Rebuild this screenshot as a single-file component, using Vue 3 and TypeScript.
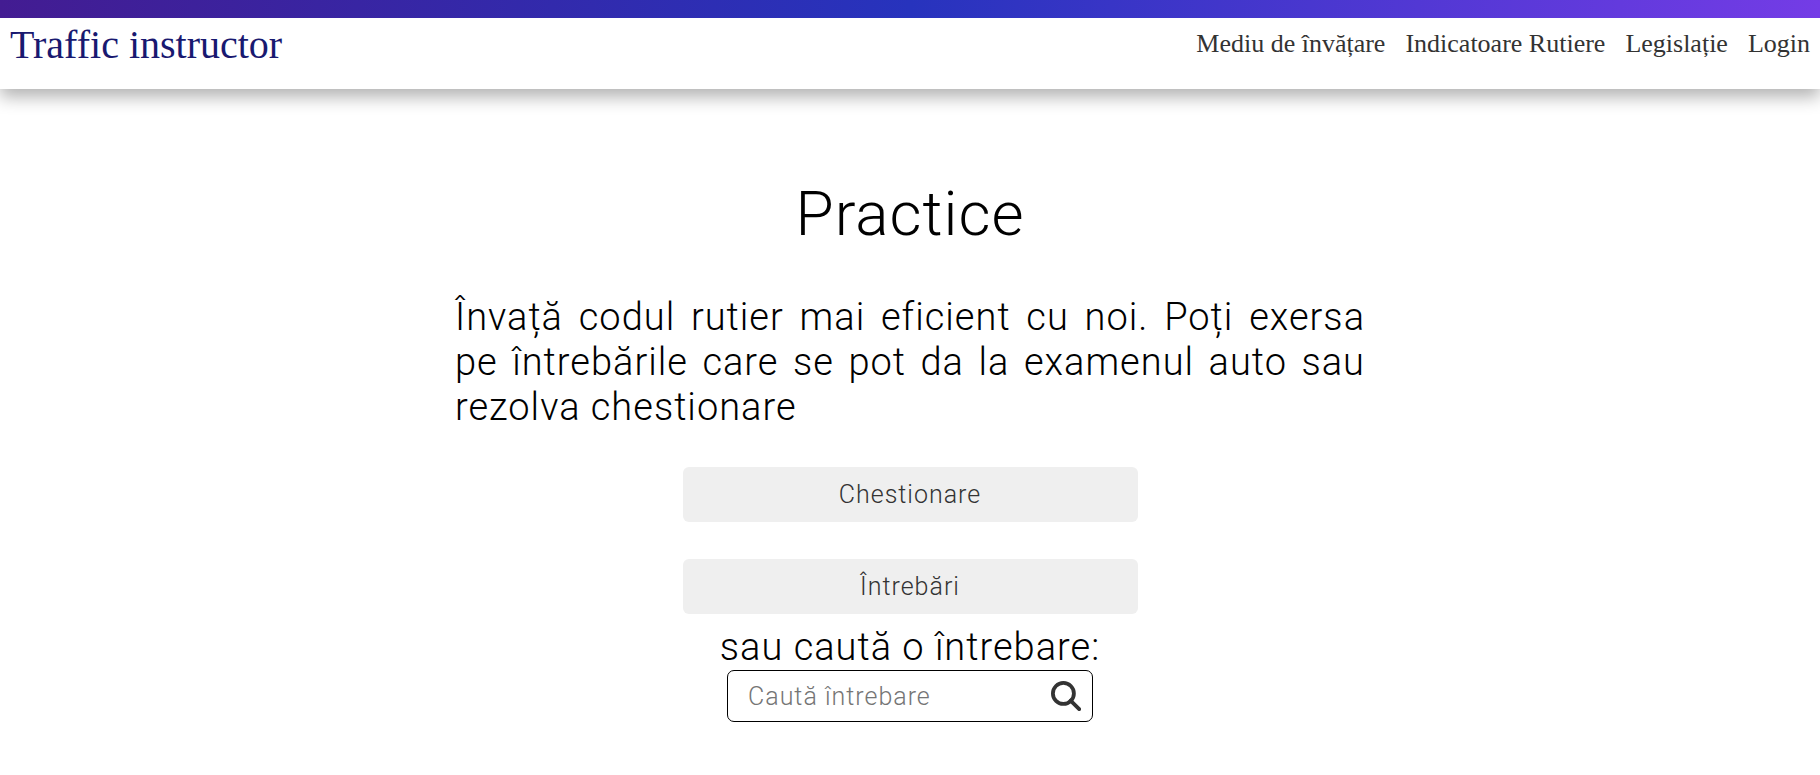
<script setup lang="ts">
import { ref } from 'vue'

const links: string[] = ['Mediu de învățare', 'Indicatoare Rutiere', 'Legislație', 'Login']
const query = ref('')
</script>

<template>
  <div class="page">
    <div class="strip"></div>
    <header class="bar">
      <a class="brand" href="#">Traffic instructor</a>
      <nav class="nav">
        <a v-for="link in links" :key="link" href="#">{{ link }}</a>
      </nav>
    </header>
    <main class="content">
      <h1>Practice</h1>
      <p class="intro">Învață codul rutier mai eficient cu noi. Poți exersa pe întrebările care se pot da la examenul auto sau rezolva chestionare</p>
      <div class="choices">
        <button class="choice" type="button">Chestionare</button>
        <button class="choice" type="button">Întrebări</button>
      </div>
      <label class="caption" for="search">sau caută o întrebare:</label>
      <form class="search" @submit.prevent>
        <input id="search" v-model="query" type="text" placeholder="Caută întrebare" />
        <button class="go" type="submit" aria-label="Caută">
          <svg viewBox="0 0 30 30" fill="none" stroke="#333" aria-hidden="true">
            <circle cx="12.400" cy="12.400" r="10.500" stroke-width="3.800" />
            <path d="M19.600 19.600L28.200 28.200" stroke-width="3.800" stroke-linecap="round" />
          </svg>
        </button>
      </form>
    </main>
  </div>
</template>

<style>
body {
  background: #fff;
}
</style>

<style scoped>
.page {
  font-family: Roboto, 'Liberation Sans', sans-serif;
  font-weight: 300;
  letter-spacing: 1px;
  color: #000;
}
.strip {
  height: 18px;
  background: linear-gradient(90deg, #431c92, #2733bd 50%, #743ce6);
}
.bar {
  display: flex;
  justify-content: space-between;
  box-sizing: border-box;
  height: 71px;
  padding: 0 10px;
  background: #fff;
  box-shadow: 0 8px 16px rgba(0, 0, 0, 0.3);
  clip-path: inset(0 0 -40px 0);
  font-family: 'Liberation Serif', serif;
  font-weight: 400;
  letter-spacing: normal;
}
.bar a {
  text-decoration: none;
  color: #333;
}
.bar .brand {
  font-size: 40px;
  line-height: 54px;
  color: #191970;
}
.nav {
  display: flex;
  gap: 20px;
  font-size: 26px;
  line-height: 52px;
}
.content {
  display: flex;
  flex-direction: column;
  align-items: center;
  width: 50%;
  margin: 0 auto;
  padding-top: 89px;
}
h1 {
  margin: 0;
  font-size: 62px;
  line-height: 72px;
  font-weight: 300;
}
.intro {
  margin: 45px 0 37px;
  font-size: 38px;
  line-height: 45px;
  text-align: justify;
}
.choices {
  display: flex;
  flex-direction: column;
  gap: 37px;
  width: 50%;
  margin-bottom: 11px;
}
.choice {
  height: 55px;
  padding: 0;
  border: 0;
  border-radius: 6px;
  background: #efefef;
  color: #333;
  font: inherit;
  font-size: 25px;
  letter-spacing: 1px;
}
.caption {
  font-size: 38px;
  line-height: 45px;
}
.search {
  display: flex;
  align-items: center;
  box-sizing: border-box;
  width: 366px;
  max-width: 100%;
  height: 52px;
  padding: 0 11px 0 20px;
  border: 1px solid #000;
  border-radius: 7px;
}
.search input {
  flex: 1;
  min-width: 0;
  padding: 0;
  border: 0;
  outline: 0;
  background: transparent;
  font: inherit;
  font-size: 25px;
  letter-spacing: 1px;
}
.go {
  display: flex;
  padding: 0;
  border: 0;
  background: transparent;
}
.go svg {
  width: 30px;
  height: 30px;
}
</style>
